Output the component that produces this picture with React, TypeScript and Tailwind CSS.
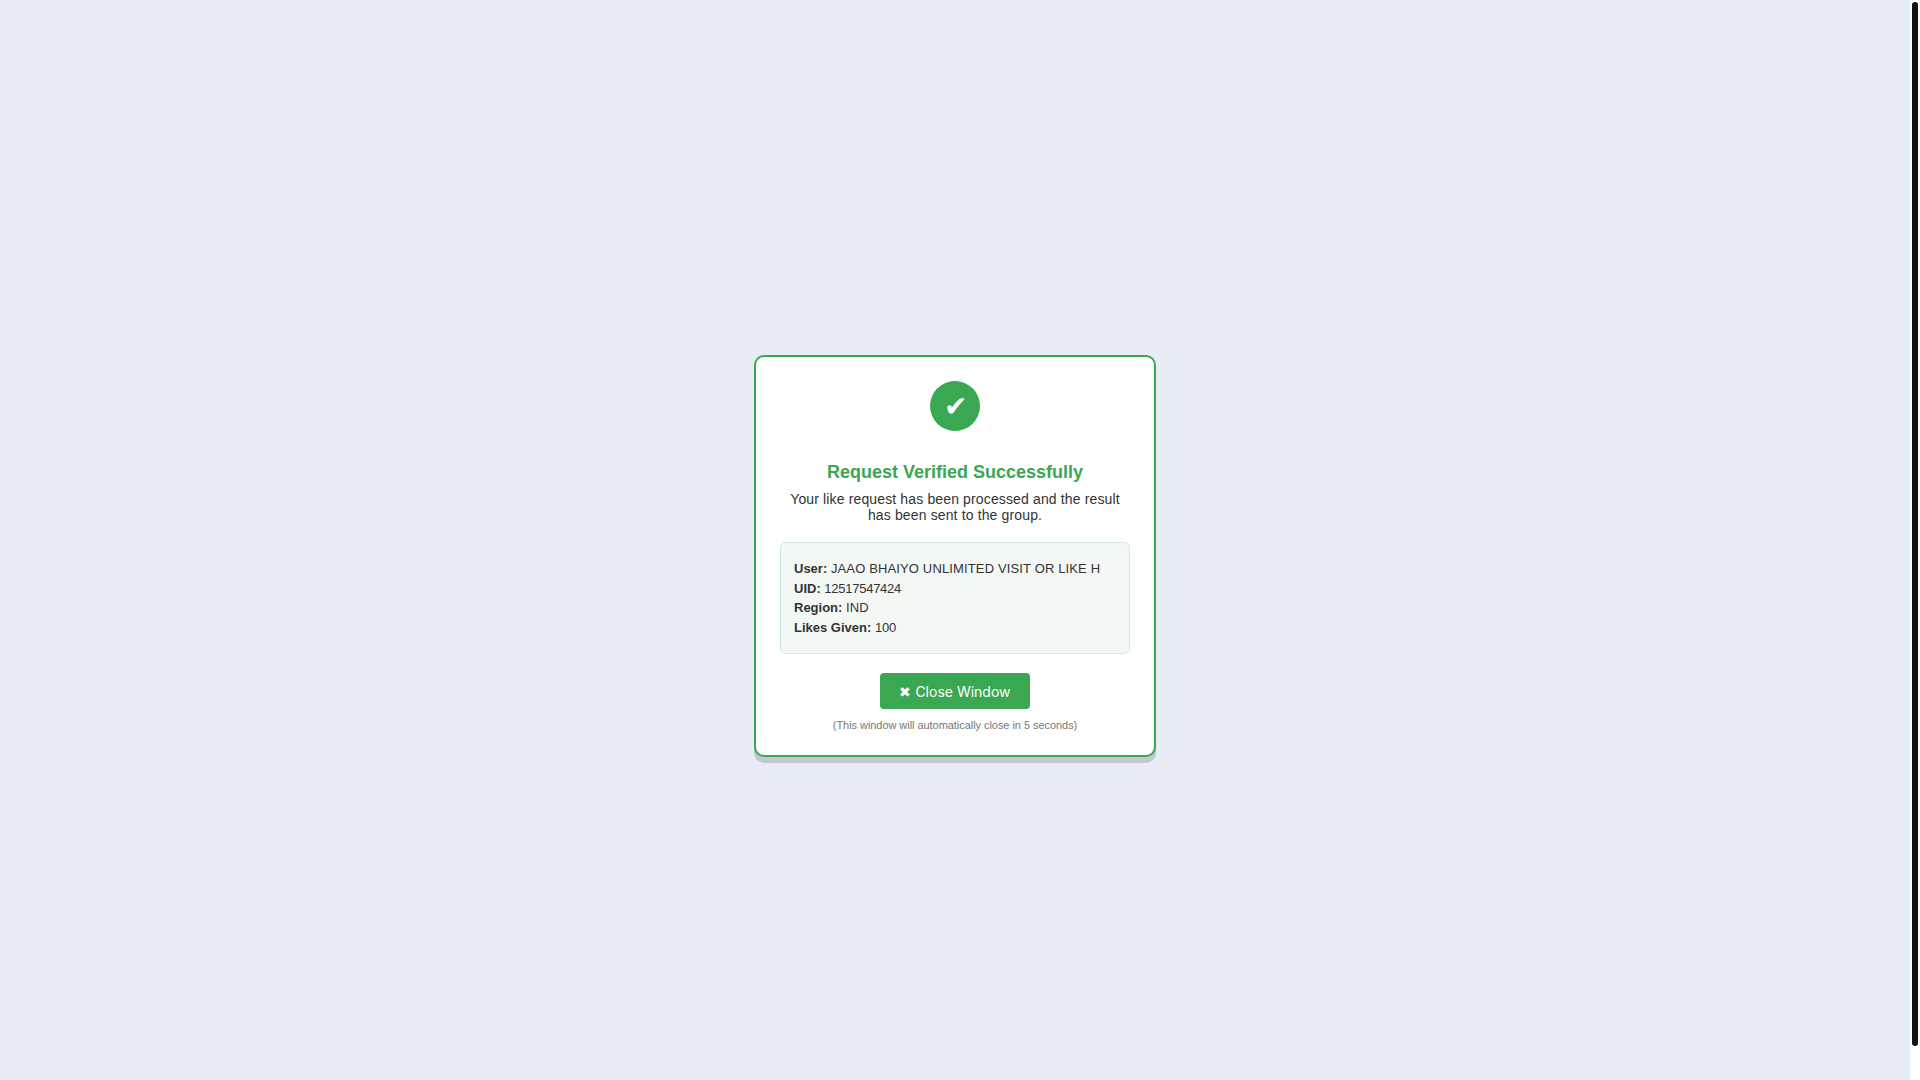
const DETAILS = [
  { label: 'User:', value: 'JAAO BHAIYO UNLIMITED VISIT OR LIKE H', tracking: 'tracking-[0.14px]' },
  { label: 'UID:', value: '12517547424', tracking: 'tracking-[-0.26px]' },
  { label: 'Region:', value: 'IND', tracking: 'tracking-[0.14px]' },
  { label: 'Likes Given:', value: '100', tracking: 'tracking-[-0.26px]' },
]

export default function App() {
  return (
    <div className="flex h-screen overflow-hidden bg-white font-['Liberation_Sans',Arial,sans-serif]">
      <main className="flex min-h-[1112px] flex-1 items-center justify-center bg-[#e8ecf4] text-[#333333]">
        <div className="w-[402px] rounded-[10px] border-2 border-[#3aa853] bg-white px-6 pt-6 pb-[23px] text-center shadow-[0_6px_0_rgba(0,0,0,0.15)]">
          <div className="mx-auto flex h-[50px] w-[50px] items-center justify-center rounded-full bg-[#3aa853] pt-[2px] text-[28px] leading-none text-white">
            ✔
          </div>

          <h1 className="mt-[31px] text-[18px] leading-[21px] font-bold text-[#3aa853]">
            Request Verified Successfully
          </h1>
          <p className="mt-2 text-[14px] leading-[16px] tracking-[0.14px]">
            Your like request has been processed and the result has been sent to the group.
          </p>

          <div className="mt-[19px] rounded-[6px] border border-[#d5e8dc] bg-[#f4f8f5] px-[13px] py-4 text-left text-[13px] leading-[19.5px]">
            {DETAILS.map(({ label, value, tracking }) => (
              <div key={label}>
                <strong>{label}</strong> <span className={tracking}>{value}</span>
              </div>
            ))}
          </div>

          <button className="mt-[19px] h-9 w-[150px] rounded-[4px] bg-[#3aa853] font-['Inter',sans-serif] text-[14px] text-white">
            ✖ Close Window
          </button>
          <p className="mt-[10px] text-[11px] leading-[13px] tracking-[-0.05px] text-[#777777]">
            (This window will automatically close in 5 seconds)
          </p>
        </div>
      </main>

      {/* page scrollbar */}
      <div className="w-2.5 shrink-0 bg-white px-0.5 pt-0.5">
        <div className="h-[1044px] rounded-full bg-[#111111]" />
      </div>
    </div>
  )
}
